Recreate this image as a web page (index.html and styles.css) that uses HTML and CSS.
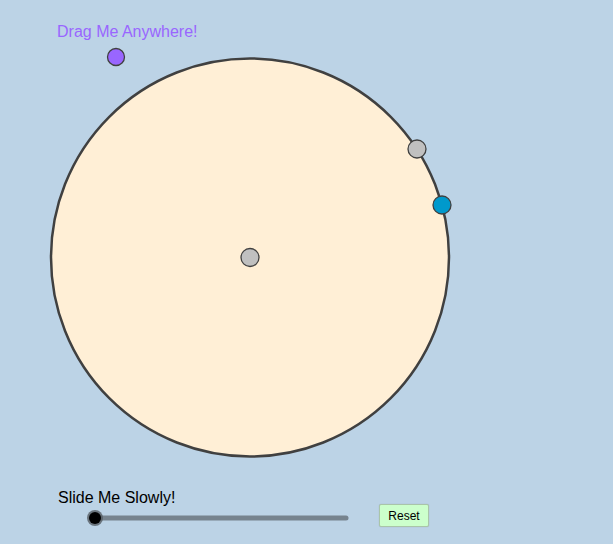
FILE: index.html
```html
<!DOCTYPE html>
<html>
<head>
<meta charset="utf-8">
<link rel="stylesheet" href="styles.css">
</head>
<body>
<div class="canvas">
  <svg class="drawing" width="613" height="544" viewBox="0 0 613 544">
    <circle cx="250" cy="257.5" r="199" fill="#ffefd6" stroke="#404040" stroke-width="2.5"/>
    <circle cx="116" cy="57" r="8.5" fill="#9966ff" stroke="#404040" stroke-width="1.3"/>
    <circle cx="417" cy="149" r="9" fill="#c0c0c0" stroke="#404040" stroke-width="1.3"/>
    <circle cx="442" cy="205" r="9" fill="#0099cc" stroke="#404040" stroke-width="1.3"/>
    <circle cx="250" cy="257.5" r="9" fill="#c0c0c0" stroke="#404040" stroke-width="1.3"/>
    <line x1="95" y1="518" x2="346" y2="518" stroke="#76838e" stroke-width="5" stroke-linecap="round"/>
    <circle cx="95" cy="518" r="8" fill="#555c63" opacity="0.8"/>
    <circle cx="95" cy="518" r="6" fill="#000"/>
  </svg>
  <div class="label drag">Drag Me Anywhere!</div>
  <div class="label slide">Slide Me Slowly!</div>
  <button class="reset">Reset</button>
</div>
</body>
</html>
```
FILE: styles.css
```css
html, body {
  margin: 0;
  padding: 0;
  background: #bcd3e6;
}
.canvas {
  position: relative;
  width: 613px;
  height: 544px;
  overflow: hidden;
  background: #bcd3e6;
  font-family: "Liberation Sans", Arial, sans-serif;
}
.drawing {
  position: absolute;
  left: 0;
  top: 0;
}
.label {
  position: absolute;
  font-size: 16px;
  line-height: 1;
  white-space: nowrap;
}
.drag {
  left: 57px;
  top: 24px;
  color: #9966ff;
}
.slide {
  left: 58px;
  top: 490px;
  color: #000;
}
.reset {
  position: absolute;
  left: 379px;
  top: 504px;
  width: 50px;
  height: 23px;
  padding: 0;
  background: #ccffcc;
  border: 1px solid #a9c5a9;
  border-radius: 2px;
  font-family: "Liberation Sans", Arial, sans-serif;
  font-size: 12px;
  color: #000;
  box-shadow: 0 0 1px rgba(0,0,0,0.2);
}
```
